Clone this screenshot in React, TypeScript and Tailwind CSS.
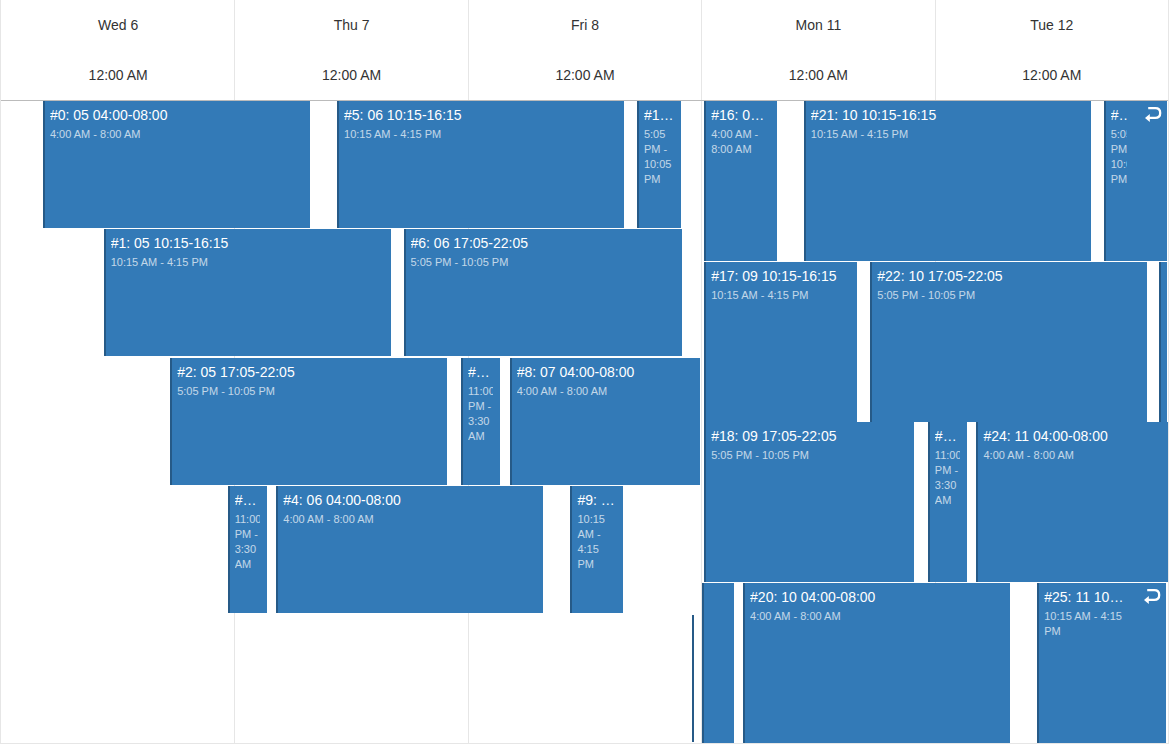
import React from "react";

type Appointment = {
  start: number;
  end: number;
  title?: string;
  time?: string;
  inset?: string;
  continues?: boolean;
};

const days = ["Wed 6", "Thu 7", "Fri 8", "Mon 11", "Tue 12"];

// Start and end are hours counted from the first midnight of the section.
const firstWeek: Appointment[][] = [
  [
    { start: 4, end: 32, title: "#0: 05 04:00-08:00", time: "4:00 AM - 8:00 AM" },
    { start: 34.25, end: 64.25, title: "#5: 06 10:15-16:15", time: "10:15 AM - 4:15 PM" },
    { start: 65.0833, end: 70.0833, title: "#10: 07 17:05-22:05", time: "5:05 PM - 10:05 PM", inset: "pl-[3px] pr-px" },
  ],
  [
    { start: 10.25, end: 40.25, title: "#1: 05 10:15-16:15", time: "10:15 AM - 4:15 PM", inset: "pl-[3px] pr-px" },
    { start: 41.0833, end: 70.0833, title: "#6: 06 17:05-22:05", time: "5:05 PM - 10:05 PM", inset: "pl-[3px] pr-px" },
  ],
  [
    { start: 17.0833, end: 46.0833, title: "#2: 05 17:05-22:05", time: "5:05 PM - 10:05 PM" },
    { start: 47, end: 51.5, title: "#7: 06 23:00-03:30", time: "11:00 PM - 3:30 AM" },
    { start: 52, end: 72, title: "#8: 07 04:00-08:00", time: "4:00 AM - 8:00 AM", inset: "pl-[3px] pr-px" },
  ],
  [
    { start: 23, end: 27.5, title: "#3: 05 23:00-03:30", time: "11:00 PM - 3:30 AM", inset: "pl-[3px] pr-px" },
    { start: 28, end: 56, title: "#4: 06 04:00-08:00", time: "4:00 AM - 8:00 AM", inset: "px-[3px]" },
    { start: 58.25, end: 64.25, title: "#9: 07 10:15-16:15", time: "10:15 AM - 4:15 PM", inset: "px-[3px]" },
  ],
  [{ start: 71, end: 71.4, inset: "px-px" }],
];

const secondWeek: Appointment[][] = [
  [
    { start: 0, end: 8, title: "#16: 09 04:00-08:00", time: "4:00 AM - 8:00 AM" },
    { start: 10.25, end: 40.25, title: "#21: 10 10:15-16:15", time: "10:15 AM - 4:15 PM" },
    { start: 41.0833, end: 48, title: "#26: 11 17:05-22:05", time: "5:05 PM\u00a0- 10:05 PM", inset: "pl-[3px] pr-px", continues: true },
  ],
  [
    { start: 0, end: 16.25, title: "#17: 09 10:15-16:15", time: "10:15 AM - 4:15 PM" },
    { start: 17.0833, end: 46.0833, title: "#22: 10 17:05-22:05", time: "5:05 PM - 10:05 PM" },
    { start: 47, end: 48, inset: "px-px" },
  ],
  [
    { start: 0, end: 22.0833, title: "#18: 09 17:05-22:05", time: "5:05 PM - 10:05 PM" },
    { start: 23, end: 27.5, title: "#23: 10 23:00-03:30", time: "11:00 PM - 3:30 AM" },
    { start: 28, end: 48, title: "#24: 11 04:00-08:00", time: "4:00 AM - 8:00 AM", inset: "pl-[3px]" },
  ],
  [
    { start: 0, end: 3.5, inset: "px-px" },
    { start: 4, end: 32, title: "#20: 10 04:00-08:00", time: "4:00 AM - 8:00 AM" },
    { start: 34.25, end: 48, title: "#25: 11 10:15-16:15", time: "10:15 AM - 4:15 PM", continues: true },
  ],
];

function ContinuesIcon() {
  return (
    <svg viewBox="0 0 18 18" className="absolute top-[5px] right-[5px] size-[18px]" fill="none" aria-hidden="true">
      <path d="M4.2 2.1H11.4C14.5 2.1 16.2 4.1 16.2 6.9C16.2 9.8 14.3 11.8 11.2 11.8H5" stroke="white" strokeWidth="2.3" />
      <path d="M1 11.9L5.8 7.9V16Z" fill="white" />
    </svg>
  );
}

function AppointmentBlock({ item, roomy }: { item: Appointment; roomy: boolean }) {
  return (
    <article
      className={`relative w-full min-w-0 overflow-hidden border-l-2 border-[#265a87] bg-[#337ab7] text-white ${
        roomy ? "h-[round(down,100%,1px)]" : "h-[calc(round(down,100%,1px)-1px)]"
      }`}
    >
      {item.title && (
        <div className={`pt-1 pl-[5px] ${item.continues ? "pr-10" : "pr-[7px]"}`}>
          <h3 className="truncate text-[14px] leading-[20px]">{item.title}</h3>
          <p className="mt-0.5 overflow-hidden text-[11px] leading-[15px] opacity-70">{item.time}</p>
        </div>
      )}
      {item.continues && <ContinuesIcon />}
    </article>
  );
}

function Section({ lanes, hours, className, roomy = false }: { lanes: Appointment[][]; hours: number; className: string; roomy?: boolean }) {
  return (
    <section className={`grid auto-rows-fr ${className}`}>
      {lanes.map((lane, row) => (
        <div key={row} className="flex min-w-0">
          {lane.map((item, i) => {
            const previousEnd = i === 0 ? 0 : lane[i - 1].end;
            return (
              <div
                key={i}
                className={`min-w-0 shrink-0 ${item.inset ?? "pl-[3px] pr-0.5"}`}
                style={{
                  marginLeft: `${((item.start - previousEnd) / hours) * 100}%`,
                  width: `${((item.end - item.start) / hours) * 100}%`,
                }}
              >
                <AppointmentBlock item={item} roomy={roomy} />
              </div>
            );
          })}
        </div>
      ))}
    </section>
  );
}

export default function App() {
  return (
    <main className="flex min-h-screen flex-col border-x border-b border-[#e6e6e6] bg-white font-['Liberation_Sans',Arial,sans-serif] text-[14px] text-[#333]">
      <header className="grid grid-cols-5 border-b border-[#bbb]">
        {days.map((day, i) => (
          <div key={day} className={`border-l text-center leading-[50px] ${i > 0 ? "border-[#e6e6e6]" : "border-transparent"}`}>
            <h2>{day}</h2>
            <p>12:00 AM</p>
          </div>
        ))}
      </header>
      <div className="grid min-h-[600px] flex-1 grid-cols-5 grid-rows-1">
        {days.map((day, i) => (
          <div
            key={day}
            className={`row-start-1 ${i > 0 ? "border-l border-[#e6e6e6]" : ""} ${
              ["col-start-1", "col-start-2", "col-start-3", "col-start-4", "col-start-5"][i]
            }`}
          />
        ))}
        <Section lanes={firstWeek} hours={72} className="z-10 col-span-3 col-start-1 row-start-1" />
        <Section lanes={secondWeek} hours={48} roomy className="z-10 col-span-2 col-start-4 row-start-1" />
      </div>
    </main>
  );
}
